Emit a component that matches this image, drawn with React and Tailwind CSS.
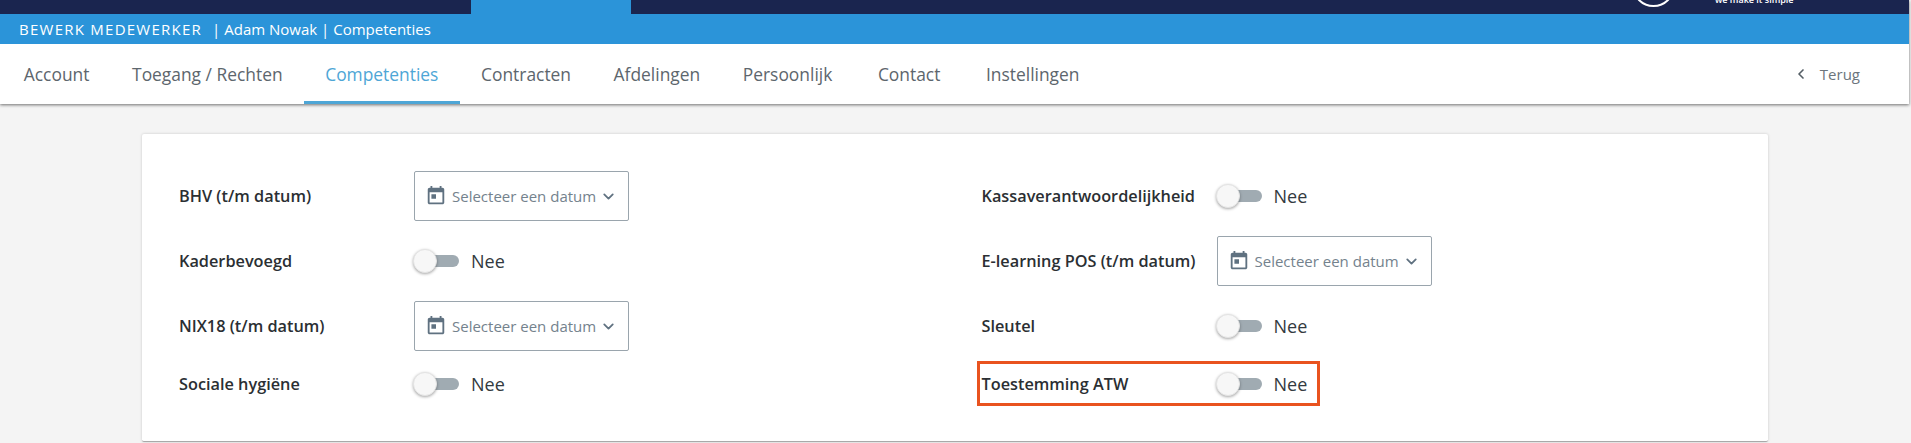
import { ChevronDown, ChevronLeft } from "lucide-react";

const tabs = ["Account", "Toegang / Rechten", "Competenties", "Contracten", "Afdelingen", "Persoonlijk", "Contact", "Instellingen"];

function CalendarIcon() {
  return (
    <svg width="22" height="22" viewBox="0 0 24 24" fill="#5f7180">
      <path d="M19 3h-1V1h-2v2H8V1H6v2H5c-1.11 0-1.99.9-1.99 2L3 19c0 1.1.89 2 2 2h14c1.1 0 2-.9 2-2V5c0-1.1-.9-2-2-2zm0 16H5V8h14v11zM7 10h5v5H7z" />
    </svg>
  );
}

function DatePicker() {
  return (
    <div className="flex h-[50px] w-[215px] items-center rounded-[2px] border border-[#9aa5ad] pl-[10px] text-[15px] text-[#74828d]">
      <CalendarIcon />
      <span className="ml-[5px] whitespace-nowrap">Selecteer een datum</span>
      <ChevronDown size={17} strokeWidth={2.5} className="ml-[4px] shrink-0 text-[#5f7180]" />
    </div>
  );
}

function Toggle() {
  return (
    <div className="flex items-center">
      <div className="relative h-[12px] w-[45px] rounded-full bg-[#a0abb2]">
        <div className="absolute -left-[1px] -top-[6px] h-[24px] w-[24px] rounded-full border border-[#e4e4e4] bg-[#f7f7f7] shadow-[0_1px_3px_rgba(0,0,0,0.35)]" />
      </div>
      <span className="ml-[12px] text-[18px] text-[#333a40]">Nee</span>
    </div>
  );
}

function Row({ label, date, highlight }) {
  return (
    <div className="relative flex items-center">
      <div className="w-[235px] shrink-0 text-[16.3px] font-semibold text-[#2b2f33]">{label}</div>
      {date ? <DatePicker /> : <Toggle />}
      {highlight && (
        <div className="absolute -left-[5px] -top-[5px] h-[45px] w-[343px] border-[3px] border-[#e9531f]" />
      )}
    </div>
  );
}

function tabClass(tab) {
  if (tab === "Competenties") {
    return "flex items-center border-b-[3px] border-[#4ea6d6] px-[21.3px] pt-[3px] text-[17.4px] text-[#4ea6d6]";
  }
  if (tab === "Contact" || tab === "Instellingen") {
    return "ml-[3px] flex items-center border-b-[3px] border-transparent px-[21.3px] pt-[3px] text-[17.4px] text-[#5d666d]";
  }
  return "flex items-center border-b-[3px] border-transparent px-[21.3px] pt-[3px] text-[17.4px] text-[#5d666d]";
}

export default function App() {
  return (
    <div className="relative h-[443px] w-full overflow-hidden bg-[#f4f4f4] font-['Open_Sans',sans-serif]">
      <div className="mr-[2px] shadow-[0_1px_3px_rgba(0,0,0,0.55)]">
        <div className="relative flex h-[14px] justify-start overflow-hidden bg-[#1a254f]">
          <div className="ml-[471px] h-full w-[160px] bg-[#2b94d9]" />
          <div className="absolute left-[1632px] -top-[36px] h-[43px] w-[43px] rounded-full border-[2px] border-white" />
          <div className="absolute left-[1715px] -top-[6px] text-[9px] font-semibold leading-[12px] whitespace-nowrap text-white">we make it simple</div>
        </div>
        <div className="flex h-[30px] items-center bg-[#2b94d9] pl-[19px] text-white">
          <span className="text-[15px] tracking-[1.25px]">BEWERK MEDEWERKER</span>
          <span className="ml-[10px] text-[15px]">| Adam Nowak | Competenties</span>
        </div>
        <div className="flex h-[60px] items-stretch bg-white pl-[2.5px]">
          {tabs.map((tab) => (
            <div key={tab} className={tabClass(tab)}>
              {tab}
            </div>
          ))}
          <div className="ml-auto mr-[49px] flex items-center text-[15px] text-[#6c757d]">
            <ChevronLeft size={16} strokeWidth={2.5} className="mr-[11px] text-[#555f66]" />
            Terug
          </div>
        </div>
      </div>

      <div className="ml-[142px] mt-[30px] h-[308px] w-[1626px] rounded-[2px] border-b border-[#a9a9a9] bg-white pl-[37px] pt-[37px] shadow-[0_0_3px_rgba(0,0,0,0.18)]">
        <div className="grid grid-cols-[802.5px_1fr] grid-rows-[50px_50px_50px_36px] gap-y-[15px]">
          <Row label="BHV (t/m datum)" date />
          <Row label="Kassaverantwoordelijkheid" />
          <Row label="Kaderbevoegd" />
          <Row label="E-learning POS (t/m datum)" date />
          <Row label="NIX18 (t/m datum)" date />
          <Row label="Sleutel" />
          <Row label="Sociale hygiëne" />
          <Row label="Toestemming ATW" highlight />
        </div>
      </div>
    </div>
  );
}
